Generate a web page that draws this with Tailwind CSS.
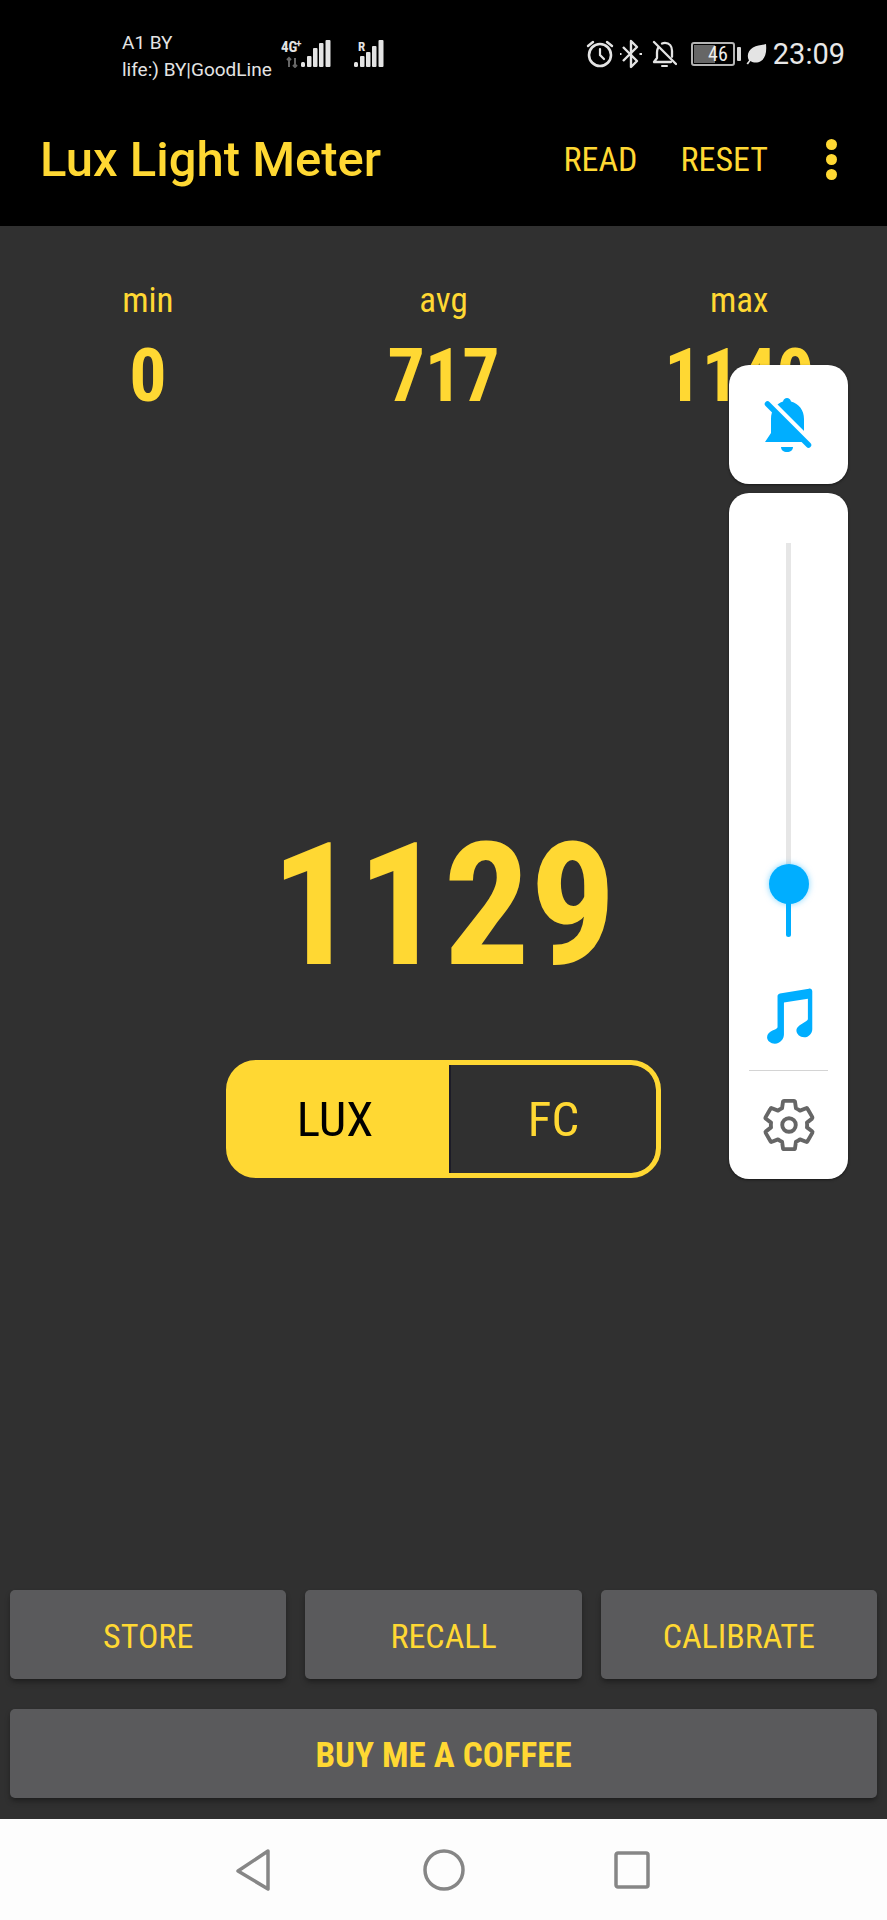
<!doctype html>
<html>
<head>
<meta charset="utf-8">
<script src="https://cdn.jsdelivr.net/npm/@tailwindcss/browser@4"></script>
</head>
<body class="bg-[#303030]">
<div class="relative w-[887px] h-[1920px] flex flex-col bg-[#303030] overflow-hidden font-['Roboto',sans-serif] text-[#ffd833]">

  <!-- status bar + app bar -->
  <header class="h-[226px] bg-black flex flex-col shrink-0">
    <div class="h-[96px] flex items-start pl-[122px] pr-[42px] pt-[29px] text-[#e4e4e4]">
      <div class="w-[159px] text-[19px] leading-[27px] [font-stretch:96%]">
        <div>A1 BY</div>
        <div class="whitespace-nowrap">life:) BY|GoodLine</div>
      </div>
      <svg class="mt-[9px]" width="50" height="30" viewBox="0 0 50 30">
        <text x="0" y="14" font-family="Roboto" font-size="15" font-weight="700" fill="#e4e4e4" class="[font-stretch:75%]">4G</text>
        <text x="15" y="9" font-family="Roboto" font-size="10" font-weight="700" fill="#e4e4e4">+</text>
        <path d="M8 29v-9M6 22l2-2 2 2M14 20v9M12 27l2 2 2-2" stroke="#666" stroke-width="2" fill="none"/>
        <g fill="#e4e4e4"><rect x="20" y="24" width="4" height="5" rx="1.500"/><rect x="26" y="18" width="4.500" height="11" rx="1"/><rect x="32" y="10" width="4.500" height="19" rx="1"/><rect x="38" y="5" width="4.500" height="24" rx="1"/><rect x="44.500" y="2" width="5" height="27" rx="1"/></g>
      </svg>
      <svg class="mt-[9px] ml-[23px]" width="30" height="30" viewBox="0 0 30 30">
        <text x="4" y="13" font-family="Roboto" font-size="13" font-weight="700" fill="#e4e4e4" class="[font-stretch:75%]">R</text>
        <g fill="#e4e4e4"><rect x="0" y="24" width="4" height="5" rx="1.500"/><rect x="6" y="18" width="4.500" height="11" rx="1"/><rect x="12" y="14" width="4.500" height="15" rx="1"/><rect x="18" y="8" width="4.500" height="21" rx="1"/><rect x="24.500" y="2" width="5" height="27" rx="1"/></g>
      </svg>
      <div class="ml-auto flex items-center h-[30px] mt-[10px]">
        <svg width="30" height="30" viewBox="0 0 30 30" fill="none" stroke="#e4e4e4" stroke-linecap="round">
          <circle cx="15" cy="16" r="11" stroke-width="2.600"/>
          <path d="M15 10v6l4 4" stroke-width="2.200"/>
          <path d="M3 7l5-4M27 7l-5-4" stroke-width="2.400"/>
        </svg>
        <svg class="ml-[5px]" width="22" height="30" viewBox="0 0 22 30" fill="none" stroke="#e4e4e4" stroke-width="2.400" stroke-linejoin="round">
          <path d="M3 8l14 14-6 6V2l6 6L3 22"/>
          <path d="M0 15h1.500M19.500 15H22" stroke-width="2"/>
        </svg>
        <svg class="ml-[9px]" width="26" height="30" viewBox="0 0 26 30" fill="none" stroke="#e4e4e4" stroke-width="2.300" stroke-linecap="round" stroke-linejoin="round">
          <path d="M7 9c-.7 1.400-1 3-1 4.500V19l-3 4h17M11 4.500c1-.5 2-.7 3-.7 4.500 0 7 3.500 7 8v6"/>
          <path d="M3 3l22 22"/>
          <path d="M11 27h5" stroke-width="2"/>
        </svg>
        <div class="relative ml-[14px] w-[44px] h-[24px] rounded-[3px] border-[2px] border-[#b5b5b5] flex items-center justify-end pr-[5px]">
          <div class="absolute left-[1px] top-[1px] bottom-[1px] w-[21px] bg-[#666]"></div>
          <span class="relative text-[20px] leading-none text-[#eee] [font-stretch:85%]">46</span>
        </div>
        <div class="ml-[2px] w-[4px] h-[14px] bg-[#d8d8d8] rounded-[1px]"></div>
        <svg class="ml-[5px]" width="21" height="21" viewBox="0 0 21 21"><path d="M20 0c.8 8-.5 14-5 17-3.500 2.300-7.500 2-10.500 0L2 20.500 .5 19.500 3 16.500C.5 12 2 6.500 7 3.500 11 1.200 16 1.200 20 0z" fill="#e4e4e4"/></svg>
        <span class="ml-[6px] text-[29px] leading-none font-normal text-[#e8e8e8] [font-stretch:90%]">23:09</span>
      </div>
    </div>
    <div class="flex items-center h-[130px] pl-[40px] pb-[4px]">
      <h1 class="text-[49px] leading-none font-medium whitespace-nowrap">Lux Light Meter</h1>
      <span class="ml-auto text-[34px] leading-none [font-stretch:75%]">READ</span>
      <span class="ml-[43px] text-[34px] leading-none [font-stretch:75%]">RESET</span>
      <div class="ml-[58px] mr-[50px] flex flex-col gap-[4px]">
        <span class="w-[11px] h-[11px] rounded-full bg-[#ffd833]"></span>
        <span class="w-[11px] h-[11px] rounded-full bg-[#ffd833]"></span>
        <span class="w-[11px] h-[11px] rounded-full bg-[#ffd833]"></span>
      </div>
    </div>
  </header>

  <!-- main -->
  <main class="relative flex-1 flex flex-col">
    <div class="grid grid-cols-3 pt-[60px] text-center">
      <div><div class="text-[35px] leading-[30px] [font-stretch:75%]">min</div><div class="mt-[23px] text-[74px] leading-[74px] font-bold [font-stretch:75%]">0</div></div>
      <div><div class="text-[35px] leading-[30px] [font-stretch:75%]">avg</div><div class="mt-[23px] text-[74px] leading-[74px] font-bold [font-stretch:75%]">717</div></div>
      <div><div class="text-[35px] leading-[30px] [font-stretch:75%]">max</div><div class="mt-[23px] text-[74px] leading-[74px] font-bold [font-stretch:75%]">1140</div></div>
    </div>

    <div class="mt-[407px] text-center text-[171px] leading-[171px] font-bold [font-stretch:75%]">1129</div>

    <div class="mt-[69px] mx-auto w-[435px] h-[118px] flex rounded-[30px] border-[5px] border-[#ffd833] bg-[#ffd833] overflow-hidden">
      <div class="w-[218px] text-black flex items-center justify-center pr-[10px] text-[49px] leading-none [font-stretch:75%]">LUX</div>
      <div class="flex-1 bg-[#303030] rounded-r-[24px] border-l-[2px] border-[#1c1c28] flex items-center justify-center text-[49px] leading-none [font-stretch:75%]">FC</div>
    </div>

    <div class="mt-auto px-[10px] pb-[21px] flex flex-col gap-[30px]">
      <div class="grid grid-cols-3 gap-[19px]">
        <div class="h-[89px] pt-[3px] rounded-[5px] bg-[#5a5a5c] shadow-md shadow-black/30 flex items-center justify-center text-[34px] leading-none [font-stretch:75%]">STORE</div>
        <div class="h-[89px] pt-[3px] rounded-[5px] bg-[#5a5a5c] shadow-md shadow-black/30 flex items-center justify-center text-[34px] leading-none [font-stretch:75%]">RECALL</div>
        <div class="h-[89px] pt-[3px] rounded-[5px] bg-[#5a5a5c] shadow-md shadow-black/30 flex items-center justify-center text-[34px] leading-none [font-stretch:75%]">CALIBRATE</div>
      </div>
      <div class="h-[89px] pt-[3px] rounded-[5px] bg-[#5a5a5c] shadow-md shadow-black/30 flex items-center justify-center text-[35px] leading-none font-bold [font-stretch:75%]">BUY ME A COFFEE</div>
    </div>

    <!-- floating volume panel -->
    <div class="absolute left-[729px] top-[139px] w-[119px] flex flex-col gap-[9px]">
      <div class="h-[119px] rounded-[20px] bg-white shadow-sm shadow-black/40 flex items-center justify-center">
        <svg width="70" height="70" viewBox="0 0 70 70">
          <path d="M33 8c2 0 3.500 1.500 4 3.500C45 14 50 20 50 29V45l6 7H11l6-9V29C17 20 22 14 29 11.500 29.500 9.500 31 8 33 8z" fill="#00aeff"/>
          <path d="M27 57h12c0 3-2.500 5-6 5s-6-2-6-5z" fill="#00aeff"/>
          <path d="M10 6.600l50 50" stroke="#fff" stroke-width="8" fill="none"/>
          <path d="M13.500 14l41 41" stroke="#00aeff" stroke-width="5.500" stroke-linecap="round" fill="none"/>
        </svg>
      </div>
      <div class="relative h-[686px] rounded-[20px] bg-white shadow-sm shadow-black/40 flex flex-col items-center">
        <div class="mt-[50px] w-[5px] h-[341px] bg-[#e6e6e6]"></div>
        <div class="relative w-[5px] h-[53px] rounded-b-full bg-[#00aeff]">
          <div class="absolute left-[-17.500px] top-[-20px] w-[40px] h-[40px] rounded-full bg-[#00aeff] shadow-[0_0_6px_#00aeff80]"></div>
        </div>
        <svg class="mt-[51px]" width="50" height="56" viewBox="188 446 148 166">
          <path d="M228 470c0-4 3-7 7-8l86-14c6-1 10 3 10 8v112c0 12-10 24-24 24-13 0-23-10-23-20 0-9 8-15 18-21 8-4 15-8 16-12v-61l-71 11v95c0 12-10 27-27 27-12 0-23-8-23-19 0-9 7-16 16-20 8-3 15-7 15-10z" fill="#00aeff"/>
        </svg>
        <div class="mt-[26px] w-[79px] h-[1px] bg-[#d4d4d4]"></div>
        <svg class="mt-[25px]" width="58" height="58" viewBox="0 0 24 24" fill="none" stroke="#666" stroke-width="1.600" stroke-linejoin="round">
          <path d="M19.430 12.980c.04-.32.07-.64.07-.98 0-.34-.03-.66-.07-.98l2.110-1.650c.19-.15.24-.42.12-.64l-2-3.460c-.12-.22-.39-.3-.61-.22l-2.490 1c-.52-.4-1.080-.73-1.690-.98l-.38-2.650C14.460 2.180 14.250 2 14 2h-4c-.25 0-.46.18-.49.42l-.38 2.650c-.61.25-1.170.59-1.690.98l-2.490-1c-.23-.09-.49 0-.61.22l-2 3.460c-.13.22-.07.49.12.64l2.110 1.650c-.04.32-.07.65-.07.98 0 .33.03.66.07.98l-2.110 1.650c-.19.15-.24.42-.12.64l2 3.460c.12.22.39.3.61.22l2.490-1c.52.4 1.080.73 1.690.98l.38 2.650c.03.24.24.42.49.42h4c.25 0 .46-.18.49-.42l.38-2.650c.61-.25 1.170-.59 1.690-.98l2.490 1c.23.09.49 0 .61-.22l2-3.460c.12-.22.07-.49-.12-.64l-2.110-1.650z"/>
          <circle cx="12" cy="12" r="2.800"/>
        </svg>
      </div>
    </div>
  </main>

  <!-- nav bar -->
  <nav class="h-[101px] shrink-0 bg-[#fdfdfd] flex items-center pl-[235px]">
    <svg width="36" height="44" viewBox="0 0 36 44" fill="none" stroke="#868686" stroke-width="3.500" stroke-linejoin="round"><path d="M33 3L3 23l30 18z"/></svg>
    <svg class="ml-[152px]" width="42" height="42" viewBox="0 0 42 42" fill="none" stroke="#868686" stroke-width="3.500"><circle cx="21" cy="21" r="19"/></svg>
    <svg class="ml-[149px]" width="36" height="38" viewBox="0 0 36 38" fill="none" stroke="#868686" stroke-width="3.500"><rect x="2" y="2" width="32" height="34" rx="2"/></svg>
  </nav>
</div>
</body>
</html>
